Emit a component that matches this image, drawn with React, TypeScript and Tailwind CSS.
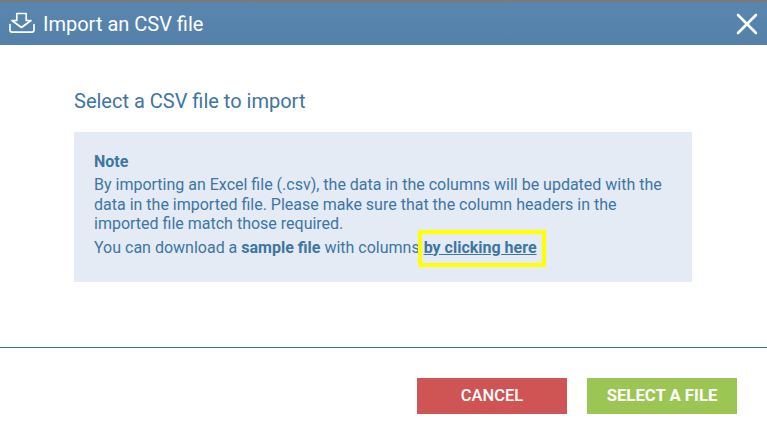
export default function App() {
  return (
    <div className="w-[767px] h-[443px] bg-white flex flex-col overflow-hidden font-['Roboto',sans-serif]">
      <div className="h-[45px] shrink-0 flex items-center justify-between bg-gradient-to-b from-[#5a86ae] to-[#5381aa] border-t-2 border-[#7a7a7a] pl-[9px] pr-[9px]">
        <div className="flex items-center gap-[8px]">
          <svg width="26" height="23" viewBox="0 0 26 23" fill="none" stroke="white" strokeWidth="1.7" strokeLinecap="round" strokeLinejoin="round">
            <path d="M7.8 1.5 H17.2 V8.5 H22 L12.5 15.5 L3 8.5 H7.8 Z" />
            <path d="M1 12.5 V18 Q1 20.2 3.2 20.2 H22.8 Q25 20.2 25 18 V12.5" />
          </svg>
          <span className="text-white text-[20px] leading-none">Import an CSV file</span>
        </div>
        <svg width="22" height="22" viewBox="0 0 22 22" stroke="white" strokeWidth="2.6" strokeLinecap="round">
          <path d="M2 2 L20 20 M20 2 L2 20" />
        </svg>
      </div>
      <div className="flex-1 pl-[74px] pr-[75px] pt-[44px]">
        <h2 className="text-[#3e75a3] text-[20px] leading-[24px] font-normal">Select a CSV file to import</h2>
        <div className="mt-[19px] h-[150px] bg-[#e4ebf5] px-5 pt-[19px] text-[#3e75a3] text-[16px] leading-[21px]">
          <div className="font-bold mb-[3px]">Note</div>
          <p className="leading-[19.5px]">By importing an Excel file (.csv), the data in the columns will be updated with the data in the imported file. Please make sure that the column headers in the imported file match those required.</p>
          <p className="mt-[3px]">
            You can download a <b>sample file</b> with columns{" "}
            <span className="relative font-bold underline">
              by clicking here
              <span className="absolute left-[-6px] right-[-9px] top-[-8px] bottom-[-10px] border-4 border-[#ffff00] rounded-[1px]" />
            </span>
          </p>
        </div>
      </div>
      <div className="h-[96px] shrink-0 border-t border-[#3e6f9b] flex justify-end items-start gap-5 pr-[30px] pt-[30px]">
        <button className="w-[150px] h-9 bg-[#cf5454] text-white text-[16.5px] font-medium">CANCEL</button>
        <button className="w-[150px] h-9 bg-[#9cc654] text-white text-[16.7px] font-bold">SELECT A FILE</button>
      </div>
    </div>
  );
}
